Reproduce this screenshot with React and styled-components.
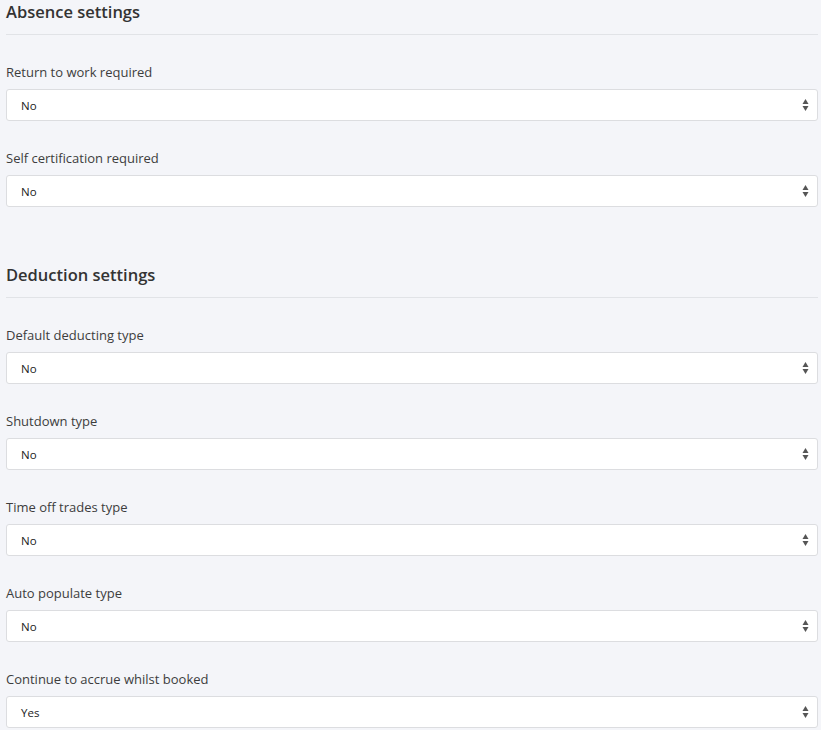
import React from "react";
import styled, { createGlobalStyle } from "styled-components";

const Global = createGlobalStyle`
  html, body { margin: 0; padding: 0; background: #f4f5f9; }
  body { font-family: "Open Sans", "Noto Sans", sans-serif; color: #333; }
`;

const Page = styled.div`
  padding: 0 3px 0 6px;
  background: #f4f5f9;
  min-height: 730px;
  box-sizing: border-box;
`;

const Section = styled.section`
  margin-bottom: ${(p) => p.$gap || 0}px;
`;

const Heading = styled.h2`
  margin: 0;
  padding-top: 2px;
  height: 35px;
  line-height: 20px;
  font-size: 16.5px;
  font-weight: 600;
  color: #333;
  border-bottom: 1px solid #e1e3e7;
  box-sizing: border-box;
`;

const Fields = styled.div`
  display: flex;
  flex-direction: column;
  gap: 25px;
  padding-top: 25px;
`;

const Field = styled.div`
  display: flex;
  flex-direction: column;
  gap: 5px;
`;

const Label = styled.label`
  font-size: 13px;
  line-height: 24px;
  color: #3d3d3d;
`;

const SelectBox = styled.div`
  position: relative;
  height: 32px;
  background: #fff;
  border: 1px solid #dcdde0;
  border-radius: 3px;
  box-sizing: border-box;
  display: flex;
  align-items: center;
  padding-left: 14px;
  font-size: 11.5px;
  color: #222;
`;

const Arrows = styled.svg`
  position: absolute;
  right: 8px;
  top: 50%;
  transform: translateY(-50%);
`;

function Select({ value }) {
  return (
    <SelectBox>
      {value}
      <Arrows width="7" height="14" viewBox="0 0 7 14">
        <path d="M3.5 1 L6.5 6 L0.5 6 Z" fill="#555" />
        <path d="M3.5 13 L6.5 8 L0.5 8 Z" fill="#555" />
      </Arrows>
    </SelectBox>
  );
}

const absence = [
  ["Return to work required", "No"],
  ["Self certification required", "No"],
];

const deduction = [
  ["Default deducting type", "No"],
  ["Shutdown type", "No"],
  ["Time off trades type", "No"],
  ["Auto populate type", "No"],
  ["Continue to accrue whilst booked", "Yes"],
];

export default function App() {
  return (
    <>
      <Global />
      <Page>
        <Section $gap={56}>
          <Heading>Absence settings</Heading>
          <Fields>
            {absence.map(([l, v]) => (
              <Field key={l}>
                <Label>{l}</Label>
                <Select value={v} />
              </Field>
            ))}
          </Fields>
        </Section>
        <Section>
          <Heading>Deduction settings</Heading>
          <Fields>
            {deduction.map(([l, v]) => (
              <Field key={l}>
                <Label>{l}</Label>
                <Select value={v} />
              </Field>
            ))}
          </Fields>
        </Section>
      </Page>
    </>
  );
}
